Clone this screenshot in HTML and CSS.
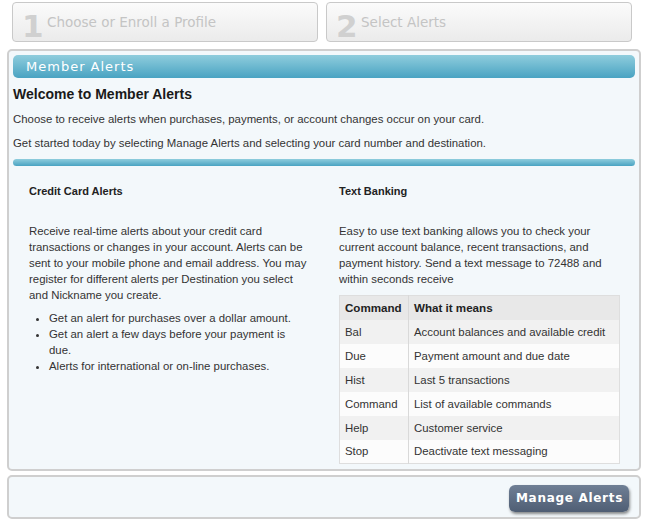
FILE: index.html
```html
<!DOCTYPE html>
<html>
	<head>
		<meta charset="UTF-8">
		<title>Member Alerts</title>
		<link rel="stylesheet" href="styles.css">
	</head>
	<body>
		<div class="steps">
			<div class="step"><span class="num">1</span><span class="label">Choose or Enroll a Profile</span></div>
			<div class="step"><span class="num">2</span><span class="label">Select Alerts</span></div>
		</div>

		<div class="panel">
			<div class="panel-title">Member Alerts</div>
			<h1>Welcome to Member Alerts</h1>
			<p class="intro">Choose to receive alerts when purchases, payments, or account changes occur on your card.</p>
			<p class="intro">Get started today by selecting Manage Alerts and selecting your card number and destination.</p>
			<div class="divider"></div>

			<div class="cols">
				<div class="col">
					<h3>Credit Card Alerts</h3>
					<p>Receive real-time alerts about your credit card transactions or changes in your account. Alerts can be sent to your mobile phone and email address. You may register for different alerts per Destination you select and Nickname you create.</p>
					<ul>
						<li>Get an alert for purchases over a dollar amount.</li>
						<li>Get an alert a few days before your payment is due.</li>
						<li>Alerts for international or on-line purchases.</li>
					</ul>
				</div>
				<div class="col">
					<h3>Text Banking</h3>
					<p>Easy to use text banking allows you to check your current account balance, recent transactions, and payment history. Send a text message to 72488 and within seconds receive</p>
					<table class="cmds">
						<tr><th>Command</th><th>What it means</th></tr>
						<tr><td>Bal</td><td>Account balances and available credit</td></tr>
						<tr><td>Due</td><td>Payment amount and due date</td></tr>
						<tr><td>Hist</td><td>Last 5 transactions</td></tr>
						<tr><td>Command</td><td>List of available commands</td></tr>
						<tr><td>Help</td><td>Customer service</td></tr>
						<tr><td>Stop</td><td>Deactivate text messaging</td></tr>
					</table>
				</div>
			</div>
		</div>

		<div class="panel actions">
			<a class="btn" href="#">Manage Alerts</a>
		</div>
	</body>
</html>
```

FILE: styles.css
```css
*{margin: 0;padding: 0;box-sizing: border-box;}
body{font-family: "Liberation Sans", Arial, sans-serif;font-size: 11.4px;color: #333;background: #fff;}

.steps{display: flex;gap: 8px;padding: 2px 0 0 12px;margin-bottom: 7px;}
.step{width: 306px;height: 40px;border: 1px solid #c9c9c9;border-radius: 4px;
	background: linear-gradient(#fbfbfb, #ebebeb);
	display: flex;align-items: center;padding-left: 9px;color: #c4c4c4;
	font-family: "DejaVu Sans", Verdana, sans-serif;}
.step .num{font-size: 31px;font-weight: bold;color: #d0d0d0;margin-top: 8px;width: 24px;}
.step .label{font-size: 13.5px;margin-left: 1px;}

.panel{margin-left: 7px;width: 634px;border: 2px solid #cfcfcf;border-radius: 5px;
	background: #f3f8fb;padding: 4px 4px 5px 4px;}
.panel-title{height: 23px;line-height: 23px;border-radius: 5px;padding-left: 13px;
	background: linear-gradient(#8fcddd, #49a3c2);color: #fff;
	font-family: "DejaVu Sans", Verdana, sans-serif;font-size: 13px;letter-spacing: 1px;}
h1{font-size: 14px;line-height: 18px;color: #1a1a1a;margin-top: 7px;}
.intro{line-height: 16px;margin-top: 8px;}
.divider{height: 7px;margin-top: 8px;border-radius: 4px;background: linear-gradient(#8fcddd, #49a3c2);}

.cols{display: grid;grid-template-columns: 281px 281px;column-gap: 29px;padding: 18px 0 0 16px;}
.col h3{font-size: 11px;line-height: 14px;color: #222;}
.col p{line-height: 16px;margin-top: 25px;}
.col ul{margin-top: 7px;padding-left: 20px;line-height: 16px;}

.cmds{margin-top: 8px;width: 281px;border-collapse: collapse;border: 1px solid #dedede;}
.cmds th, .cmds td{height: 24px;padding: 0 5px;text-align: left;font-size: 11.4px;white-space: nowrap;}
.cmds th{background: #e8e8e8;font-weight: bold;font-size: 11.6px;color: #222;}
.cmds th:first-child, .cmds td:first-child{width: 69px;border-right: 1px solid #d9d9d9;}
.cmds tr:nth-child(even) td{background: #f1f1f1;}
.cmds tr:nth-child(odd) td{background: #fcfcfc;}

.actions{margin-top: 4px;height: 44px;padding: 8px 10px 0 0;display: flex;justify-content: flex-end;align-items: flex-start;}
.btn{display: block;height: 27px;line-height: 27px;padding: 0 6px 0 7px;border-radius: 6px;
	background: linear-gradient(#6f7f95, #4f5e74);color: #fff;text-decoration: none;
	font-family: "DejaVu Sans", Verdana, sans-serif;font-weight: bold;font-size: 12px;letter-spacing: 0.7px;
	box-shadow: 1px 2px 3px rgba(0,0,0,.45);}
```
